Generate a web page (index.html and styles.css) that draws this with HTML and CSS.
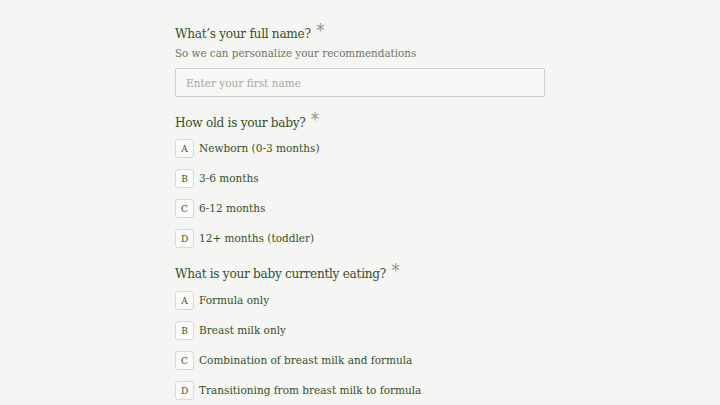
FILE: index.html
```html
<!DOCTYPE html>
<html lang="en">
<head>
<meta charset="utf-8">
<title>Baby feeding quiz</title>
<link rel="stylesheet" href="styles.css">
</head>
<body>
<main class="form">
  <section class="question">
    <h2 class="q-title">What’s your full name? <span class="req">*</span></h2>
    <p class="q-sub">So we can personalize your recommendations</p>
    <input class="text-input" type="text" placeholder="Enter your first name">
  </section>

  <section class="question">
    <h2 class="q-title">How old is your baby? <span class="req">*</span></h2>
    <ul class="options">
      <li class="option"><span class="key">A</span><span class="label">Newborn (0-3 months)</span></li>
      <li class="option"><span class="key">B</span><span class="label">3-6 months</span></li>
      <li class="option"><span class="key">C</span><span class="label">6-12 months</span></li>
      <li class="option"><span class="key">D</span><span class="label">12+ months (toddler)</span></li>
    </ul>
  </section>

  <section class="question">
    <h2 class="q-title">What is your baby currently eating? <span class="req">*</span></h2>
    <ul class="options">
      <li class="option"><span class="key">A</span><span class="label">Formula only</span></li>
      <li class="option"><span class="key">B</span><span class="label">Breast milk only</span></li>
      <li class="option"><span class="key">C</span><span class="label">Combination of breast milk and formula</span></li>
      <li class="option"><span class="key">D</span><span class="label">Transitioning from breast milk to formula</span></li>
    </ul>
  </section>
</main>
</body>
</html>
```

FILE: styles.css
```css
* { box-sizing: border-box; }
html, body { margin: 0; padding: 0; }
body {
  background: #f5f5f4;
  font-family: "DejaVu Serif Condensed", "Liberation Serif", serif;
  font-stretch: condensed;
  color: #34511e;
}
.form {
  width: 370px;
  margin: 0 auto;
  padding-top: 23px;
}
.question { margin-bottom: 15px; }
.q-title {
  margin: 0;
  font-size: 13.5px;
  letter-spacing: -0.3px;
  font-weight: normal;
  line-height: 20px;
  color: #34511e;
}
.req {
  color: #8a9a80;
  font-size: 18px;
  vertical-align: top;
  line-height: 16px;
  margin-left: 2px;
  letter-spacing: 0;
}
.q-sub {
  margin: 1px 0 6px;
  font-size: 11.5px;
  line-height: 18px;
  color: #6a7561;
}
.text-input {
  display: block;
  width: 370px;
  height: 29px;
  border: 1px solid #cfd0cc;
  border-radius: 2px;
  background: #f7f7f6;
  padding: 0 10px;
  font-family: inherit;
  font-stretch: condensed;
  font-size: 11.7px;
  color: #34511e;
}
.text-input::placeholder { color: #a3a89d; }
.options {
  list-style: none;
  margin: 6px 0 0;
  padding: 0;
  display: flex;
  flex-direction: column;
  gap: 10px;
}
.question + .question + .question .options { margin-top: 7px; }
.option {
  display: flex;
  align-items: center;
  gap: 5px;
  height: 20px;
}
.key {
  width: 19px;
  height: 19px;
  border: 1px solid #d8d9d5;
  border-radius: 3px;
  background: #fbfbfa;
  display: flex;
  align-items: center;
  justify-content: center;
  font-size: 10px;
  color: #34511e;
}
.label {
  font-size: 11.7px;
  color: #34511e;
}
```
